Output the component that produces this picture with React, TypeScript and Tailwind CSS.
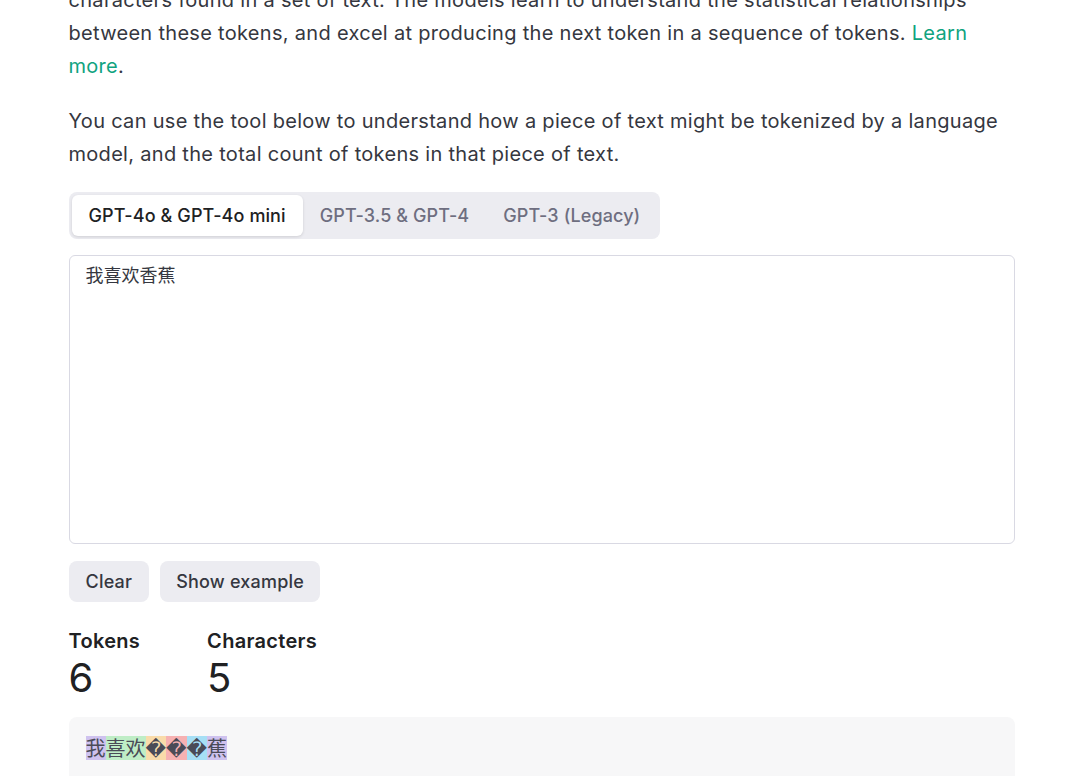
const tokens = [
  { text: "我", bg: "bg-[#cfc2ef]" },
  { text: "喜欢", bg: "bg-[#bfedc6]" },
  { text: "\uFFFD", bg: "bg-[#f9dbaa]" },
  { text: "\uFFFD", bg: "bg-[#f6b1b2]" },
  { text: "\uFFFD", bg: "bg-[#a6dff5]" },
  { text: "蕉", bg: "bg-[#cfc2ef]" },
];

export default function App() {
  return (
    <div className="h-[776px] w-full overflow-hidden bg-white font-['Inter','Noto_Sans_CJK_SC',sans-serif] text-[#353740]">
      <div className="mx-auto w-[946px]">
        {/* intro text, scrolled partly out of view */}
        <p className="-mt-[16px] text-[20px] leading-[33px] tracking-[0.3px]">
          characters found in a set of text. The models learn to understand the statistical relationships
          between these tokens, and excel at producing the next token in a sequence of tokens.{" "}
          <a href="#" className="text-[#10a37f]">
            Learn more
          </a>
          .
        </p>

        <p className="mt-[22px] text-[20px] leading-[33px] tracking-[0.3px]">
          You can use the tool below to understand how a piece of text might be tokenized by a language
          model, and the total count of tokens in that piece of text.
        </p>

        {/* model tabs */}
        <div className="mt-[21px] inline-flex h-[47px] items-center rounded-lg bg-[#ececf1] p-[3px]">
          <button className="h-[41px] rounded-md bg-white px-[17px] text-[18px] font-medium tracking-[0.1px] text-[#202123] shadow-[0_1px_3px_rgba(0,0,0,0.12)]">
            GPT-4o &amp; GPT-4o mini
          </button>
          <button className="h-[41px] px-[17px] text-[18px] font-medium tracking-[0.1px] text-[#6e6e80]">
            GPT-3.5 &amp; GPT-4
          </button>
          <button className="h-[41px] px-[17px] text-[18px] font-medium tracking-[0.1px] text-[#6e6e80]">
            GPT-3 (Legacy)
          </button>
        </div>

        <textarea
          defaultValue="我喜欢香蕉"
          className="mt-[16px] block h-[289px] w-full resize-none rounded-md border border-[#d9d9e3] px-4 pt-[5px] font-['Noto_Sans_CJK_SC',sans-serif] text-[18px] leading-[26px] text-[#353740] outline-none"
        />

        <div className="mt-[17px] flex gap-[11px]">
          <button className="h-[41px] rounded-lg bg-[#ececf1] px-[17px] text-[18px] font-medium tracking-[0.2px] text-[#353740]">
            Clear
          </button>
          <button className="h-[41px] rounded-lg bg-[#ececf1] px-[16px] text-[18px] font-medium tracking-[0.2px] text-[#353740]">
            Show example
          </button>
        </div>

        {/* counts */}
        <div className="mt-[26px] flex gap-[67px]">
          <div>
            <div className="text-[20px] font-semibold leading-[26px] tracking-[0.3px] text-[#202123]">Tokens</div>
            <div className="text-[40px] leading-[48px] text-[#202123]">6</div>
          </div>
          <div>
            <div className="text-[20px] font-semibold leading-[26px] tracking-[0.3px] text-[#202123]">Characters</div>
            <div className="text-[40px] leading-[48px] text-[#202123]">5</div>
          </div>
        </div>

        {/* tokenized output */}
        <div className="mt-[15px] h-[120px] rounded-lg bg-[#f7f7f8] px-[17px] py-[19px]">
          <div className="flex font-['Noto_Sans_CJK_SC','DejaVu_Sans',sans-serif] text-[20px] leading-[24px] text-[#4a4b57]">
            {tokens.map((t, i) => (
              <span key={i} className={t.bg}>
                {t.text}
              </span>
            ))}
          </div>
        </div>
      </div>
    </div>
  );
}
